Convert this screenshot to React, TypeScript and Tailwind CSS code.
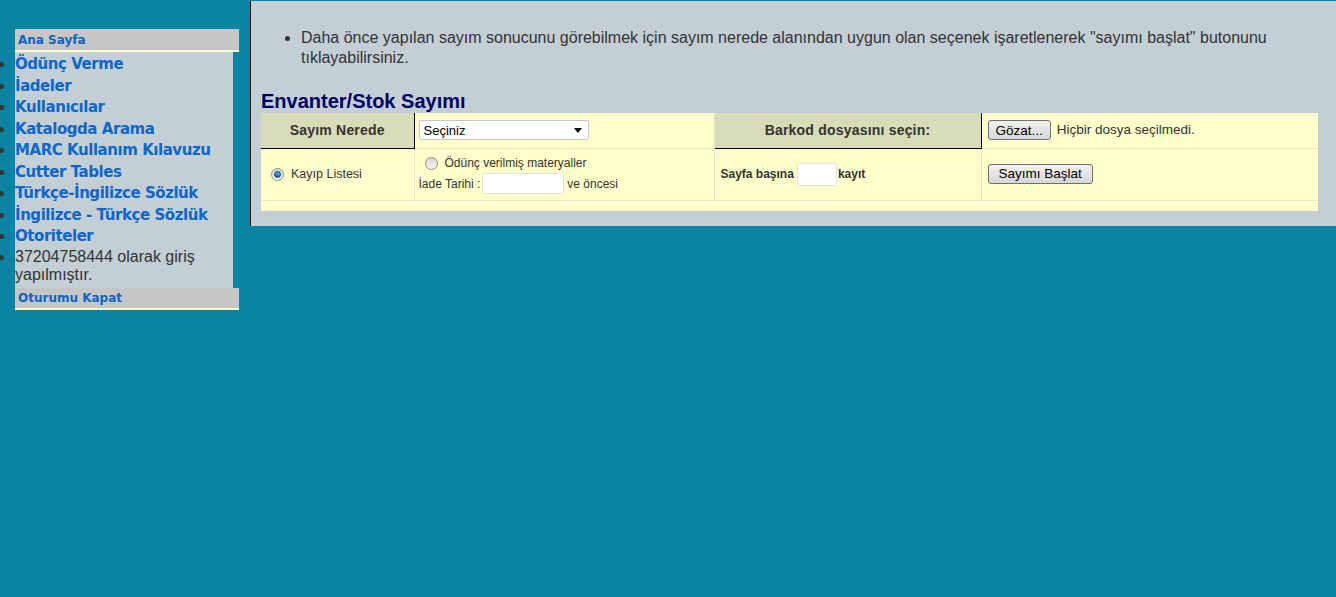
import React from 'react';

const menuLinks = [
  'Ödünç Verme',
  'İadeler',
  'Kullanıcılar',
  'Katalogda Arama',
  'MARC Kullanım Kılavuzu',
  'Cutter Tables',
  'Türkçe-İngilizce Sözlük',
  'İngilizce - Türkçe Sözlük',
  'Otoriteler',
];

function Radio({ checked }: { checked?: boolean }) {
  return (
    <span className="inline-flex h-[13px] w-[13px] items-center justify-center rounded-full border border-[#8e8f8f] bg-gradient-to-b from-[#d6d6d6] to-[#f7f7f7] align-middle">
      {checked && (
        <span className="h-[7px] w-[7px] rounded-full border border-[#0a3f73] bg-gradient-to-b from-[#5fb8f0] to-[#1563b0]" />
      )}
    </span>
  );
}

function Button({ children, wide }: { children: React.ReactNode; wide?: boolean }) {
  return (
    <button
      className={`h-[20px] rounded-[3px] border border-[#707070] bg-gradient-to-b from-[#f2f2f2] to-[#d6d6d6] text-[13.5px] leading-none text-black ${
        wide ? 'px-[10px]' : 'px-[7px]'
      }`}
    >
      {children}
    </button>
  );
}

function Sidebar() {
  return (
    <div className="w-[250px] shrink-0 pt-[29px]">
      <div className="ml-[15px] w-[224px]">
        <div className="h-[23px] border-b-2 border-[#fffacd] bg-[#c6c6c6] pl-[3px] text-[12px] font-bold leading-[22px] text-[#0b64c8] [font-family:'DejaVu_Sans',sans-serif]">
          Ana Sayfa
        </div>
        <ul className="w-[218px] list-disc bg-[#c3ced5] pb-[4px] pt-[2px] marker:text-[#333]">
          {menuLinks.map((l) => (
            <li
              key={l}
              className="text-[15px] font-bold leading-[21.5px] tracking-[-0.45px] text-[#0d66c9] [font-family:'DejaVu_Sans',sans-serif]"
            >
              {l}
            </li>
          ))}
          <li className="text-[16px] leading-[18px] text-[#333] [font-family:'Liberation_Sans',Arial,sans-serif]">
            37204758444 olarak giriş yapılmıştır.
          </li>
        </ul>
        <div className="h-[22px] border-b-2 border-[#fffacd] bg-[#c6c6c6] pl-[3px] text-[12px] font-bold leading-[21px] text-[#0b64c8] [font-family:'DejaVu_Sans',sans-serif]">
          Oturumu Kapat
        </div>
      </div>
    </div>
  );
}

function Inventory() {
  return (
    <div className="mt-[1px] flex-1 self-start border-l border-black bg-[#c3ced5] pb-[15px] pl-[10px] pr-[18px] pt-[27px] text-[#333] [font-family:'Liberation_Sans',Arial,sans-serif]">
      <ul className="ml-[40px] list-disc text-[16px] leading-[20px] marker:text-[#333]">
        <li>
          Daha önce yapılan sayım sonucunu görebilmek için sayım nerede alanından uygun olan seçenek işaretlenerek
          "sayımı başlat" butonunu tıklayabilirsiniz.
        </li>
      </ul>
      <h2 className="mt-[22px] text-[20px] font-bold leading-[23px] text-[#000066]">Envanter/Stok Sayımı</h2>
      <table className="w-[1057px] table-fixed border-collapse bg-[#ffffcc] text-[12px]">
        <colgroup>
          <col className="w-[153px]" />
          <col className="w-[300px]" />
          <col className="w-[267px]" />
          <col className="w-[337px]" />
        </colgroup>
        <tbody>
          <tr className="h-[35px]">
            <td className="border-b border-r border-black bg-[#d8dcb8] text-center text-[14px] font-bold tracking-[0.2px]">
              Sayım Nerede
            </td>
            <td className="border-b border-[#e6e6c4] pl-[4px]">
              <div className="flex h-[20px] w-[170px] items-center justify-between rounded-[2px] border border-[#c8c8c8] bg-white pl-[4px] pr-[6px] text-[13px] text-black">
                <span>Seçiniz</span>
                <svg width="8" height="5" viewBox="0 0 8 5">
                  <path d="M0 0h8L4 5z" fill="#000" />
                </svg>
              </div>
            </td>
            <td className="border-b border-l border-r border-b-black border-l-[#e6e6c4] border-r-black bg-[#d8dcb8] text-center text-[14px] font-bold tracking-[0.2px]">
              Barkod dosyasını seçin:
            </td>
            <td className="border-b border-[#e6e6c4] pl-[6px]">
              <div className="flex items-center gap-[6px]">
                <Button>Gözat...</Button>
                <span className="text-[13.5px]">Hiçbir dosya seçilmedi.</span>
              </div>
            </td>
          </tr>
          <tr className="h-[52px]">
            <td className="border-b border-r border-[#e6e6c4] pl-[10px]">
              <div className="flex items-center gap-[7px]">
                <Radio checked />
                <span className="text-[12.5px]">Kayıp Listesi</span>
              </div>
            </td>
            <td className="border-b border-r border-[#e6e6c4] pl-[4px]">
              <div className="flex items-center gap-[7px] pl-[6px]">
                <Radio />
                <span>Ödünç verilmiş materyaller</span>
              </div>
              <div className="mt-[1px] flex items-center">
                <span>İade Tarihi :</span>
                <span className="ml-[2px] h-[21px] w-[82px] rounded-[2px] border border-[#e1e1e1] bg-white" />
                <span className="ml-[3px]">ve öncesi</span>
              </div>
            </td>
            <td className="border-b border-r border-[#e6e6c4] pl-[6px]">
              <div className="flex items-center text-[12px] font-bold">
                <span>Sayfa başına</span>
                <span className="ml-[3px] h-[23px] w-[40px] rounded-[2px] border border-[#e1e1e1] bg-white" />
                <span className="ml-[1px]">kayıt</span>
              </div>
            </td>
            <td className="border-b border-[#e6e6c4] pl-[6px]">
              <Button wide>Sayımı Başlat</Button>
            </td>
          </tr>
          <tr className="h-[11px]">
            <td />
            <td />
            <td />
            <td />
          </tr>
        </tbody>
      </table>
    </div>
  );
}

export default function App() {
  return (
    <div className="flex min-h-[597px] items-start bg-[#0b83a3]">
      <Sidebar />
      <Inventory />
    </div>
  );
}
